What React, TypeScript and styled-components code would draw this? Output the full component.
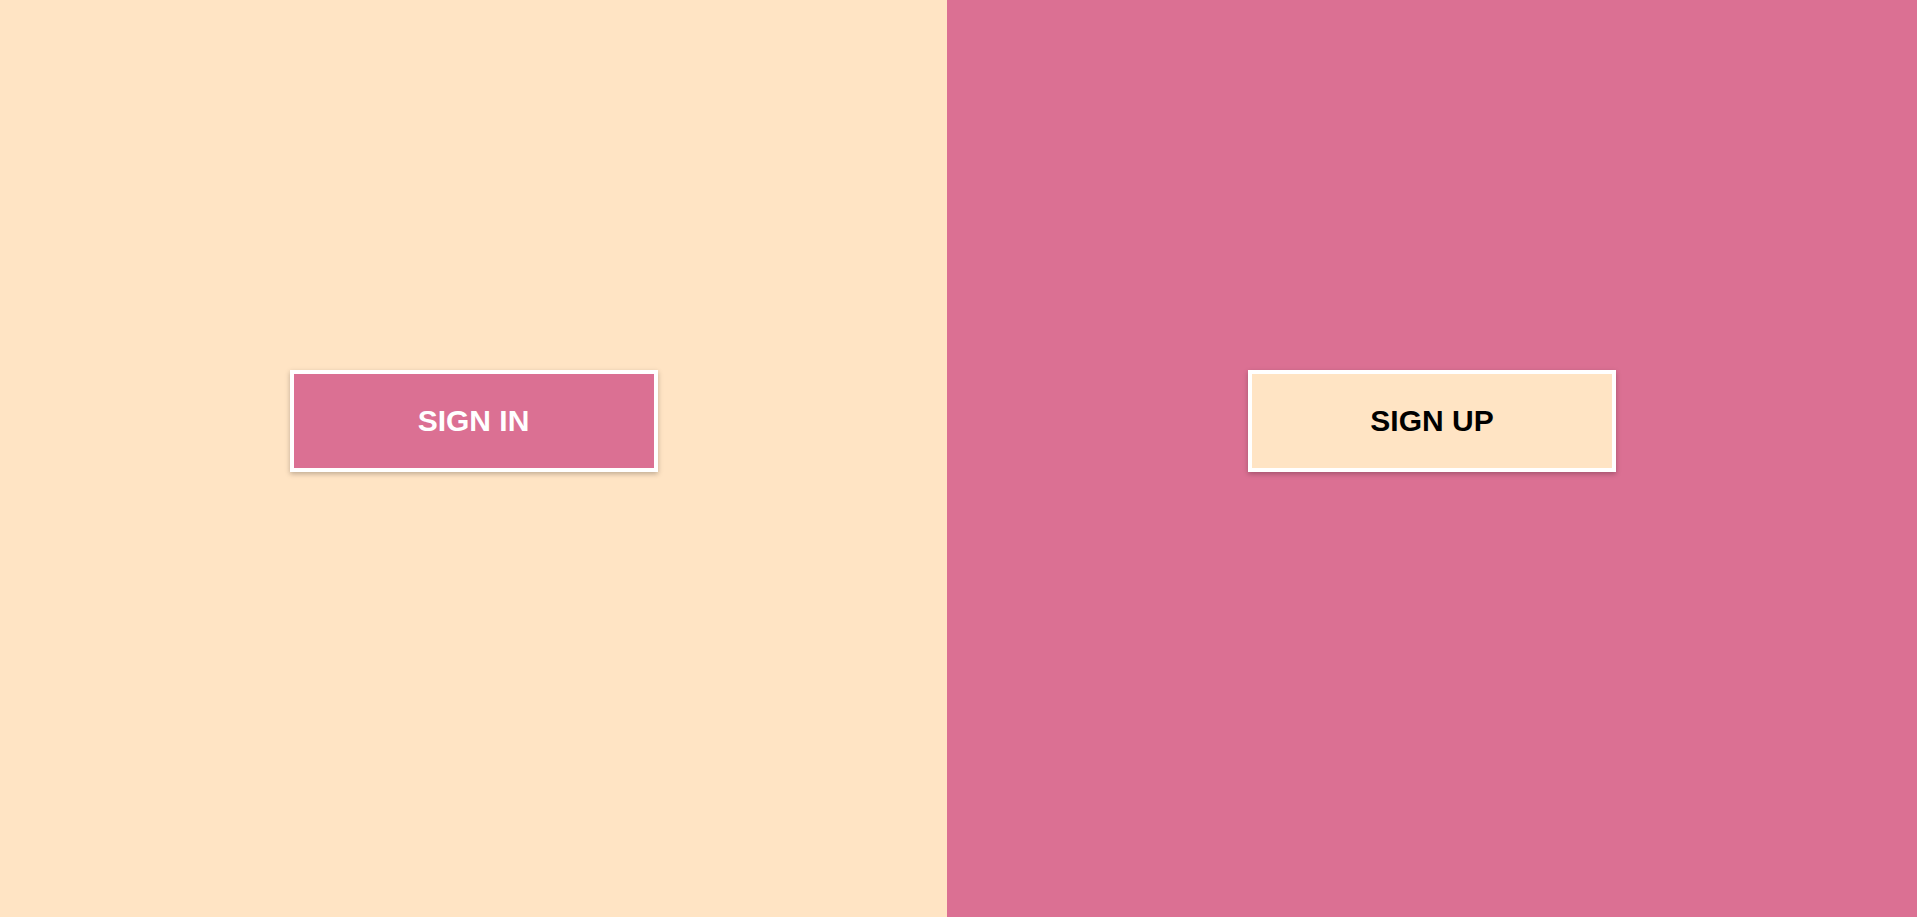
import React from "react";
import styled, { createGlobalStyle } from "styled-components";

const GlobalStyle = createGlobalStyle`
  html, body { margin: 0; padding: 0; }
  body { font-family: "Liberation Sans", Arial, sans-serif; }
`;

const Page = styled.div`
  display: grid;
  grid-template-columns: 947px 1fr;
  width: 100%;
  height: 917px;
`;

const Panel = styled.section<{ $bg: string }>`
  background: ${(p) => p.$bg};
  display: flex;
  justify-content: center;
  align-items: flex-start;
  padding-top: 370px;
  box-sizing: border-box;
`;

const Button = styled.button<{ $bg: string; $fg: string }>`
  width: 368px;
  height: 102px;
  box-sizing: border-box;
  border: 4px solid #ffffff;
  background: ${(p) => p.$bg};
  color: ${(p) => p.$fg};
  font-family: "Liberation Sans", Arial, sans-serif;
  font-weight: 700;
  font-size: 30px;
  text-transform: uppercase;
  box-shadow: 0 2px 5px rgba(0, 0, 0, 0.25);
  cursor: pointer;
  padding: 0;
`;

const PINK = "#db7093";
const BEIGE = "#ffe4c4";

export default function App() {
  return (
    <>
      <GlobalStyle />
      <Page>
        <Panel $bg={BEIGE}>
          <Button $bg={PINK} $fg="#ffffff">Sign In</Button>
        </Panel>
        <Panel $bg={PINK}>
          <Button $bg={BEIGE} $fg="#000000">Sign Up</Button>
        </Panel>
      </Page>
    </>
  );
}
